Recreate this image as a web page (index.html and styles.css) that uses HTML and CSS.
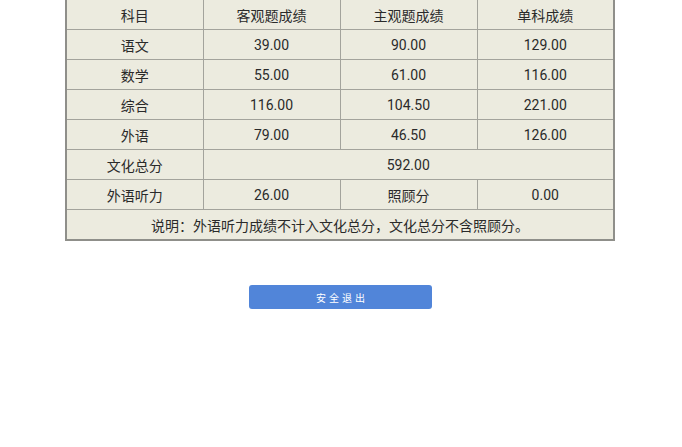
FILE: index.html
```html
<!DOCTYPE html>
<html lang="zh">
<head>
<meta charset="utf-8">
<link rel="stylesheet" href="styles.css">
</head>
<body>
<div class="page">
  <table class="scores">
    <tr><td>科目</td><td>客观题成绩</td><td>主观题成绩</td><td>单科成绩</td></tr>
    <tr><td>语文</td><td>39.00</td><td>90.00</td><td>129.00</td></tr>
    <tr><td>数学</td><td>55.00</td><td>61.00</td><td>116.00</td></tr>
    <tr><td>综合</td><td>116.00</td><td>104.50</td><td>221.00</td></tr>
    <tr><td>外语</td><td>79.00</td><td>46.50</td><td>126.00</td></tr>
    <tr><td>文化总分</td><td colspan="3">592.00</td></tr>
    <tr><td>外语听力</td><td>26.00</td><td>照顾分</td><td>0.00</td></tr>
    <tr><td colspan="4">说明：外语听力成绩不计入文化总分，文化总分不含照顾分。</td></tr>
  </table>
  <button class="logout">安全退出</button>
</div>
</body>
</html>
```
FILE: styles.css
```css
html, body {
  margin: 0;
  padding: 0;
  background: #ffffff;
}
.page {
  display: flex;
  flex-direction: column;
  align-items: flex-start;
  padding-left: 65px;
  font-family: Roboto, "Noto Sans CJK SC", sans-serif;
}
.scores {
  margin-top: -2px;
  width: 550px;
  border-collapse: collapse;
  background: #ecebdf;
  border: 2px solid #8f8f8a;
  table-layout: fixed;
}
.scores td {
  height: 29px;
  padding: 0;
  border: 1px solid #a3a39c;
  text-align: center;
  vertical-align: middle;
  font-size: 14px;
  color: #2a2a2a;
}
.logout {
  margin-top: 44px;
  margin-left: 184px;
  width: 183px;
  height: 24px;
  border: none;
  border-radius: 3px;
  background: #5185d9;
  color: #ffffff;
  font-family: "Noto Sans CJK SC", sans-serif;
  font-size: 10px;
  letter-spacing: 3px;
  padding: 0 0 0 3px;
}
```
